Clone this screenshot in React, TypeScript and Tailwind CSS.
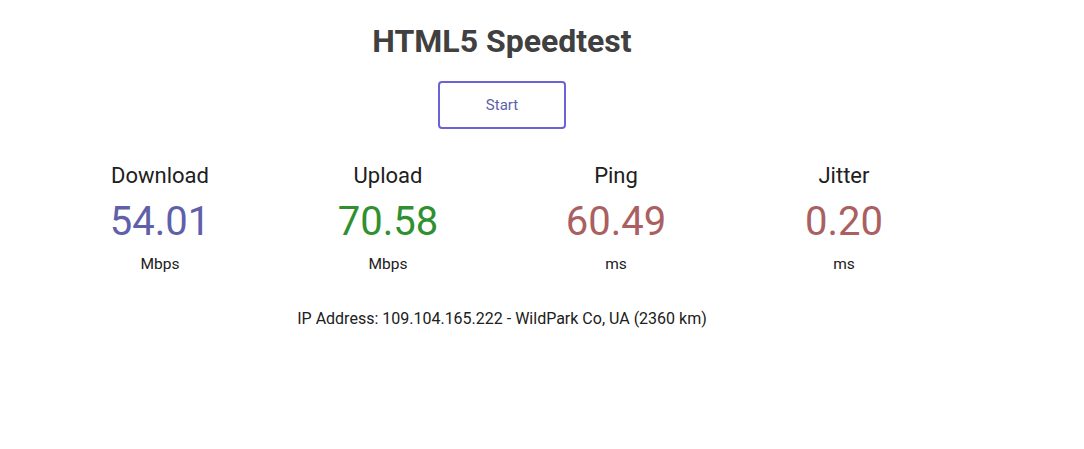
import React from "react";

const stats = [
  { name: "Download", value: "54.01", unit: "Mbps", color: "text-[#6060aa]" },
  { name: "Upload", value: "70.58", unit: "Mbps", color: "text-[#309030]" },
  { name: "Ping", value: "60.49", unit: "ms", color: "text-[#aa6060]" },
  { name: "Jitter", value: "0.20", unit: "ms", color: "text-[#aa6060]" },
];

export default function App() {
  return (
    <div className="w-[1084px] h-[449px] bg-white font-['Roboto',sans-serif] text-[#202020]">
      <div className="w-[1004px] flex flex-col items-center">
        <h1 className="mt-[21px] text-[32px] leading-[40px] font-bold text-[#404040]">
          HTML5 Speedtest
        </h1>
        <button className="mt-[20px] w-[128px] h-[48px] border-2 border-[#6a63d6] rounded-[4px] text-[15px] text-[#6060aa]">
          Start
        </button>
        <div className="mt-[33px] grid grid-cols-4 w-[912px]">
          {stats.map((s) => (
            <div key={s.name} className="flex flex-col items-center">
              <div className="text-[22px] leading-[28px]">{s.name}</div>
              <div className={`text-[40px] leading-[48px] mt-[8px] ${s.color}`}>{s.value}</div>
              <div className="text-[15.5px] leading-[20px] mt-[8px]">{s.unit}</div>
            </div>
          ))}
        </div>
        <div className="mt-[35px] text-[16px] leading-[20px]">
          IP Address: 109.104.165.222 - WildPark Co, UA (2360 km)
        </div>
      </div>
    </div>
  );
}
